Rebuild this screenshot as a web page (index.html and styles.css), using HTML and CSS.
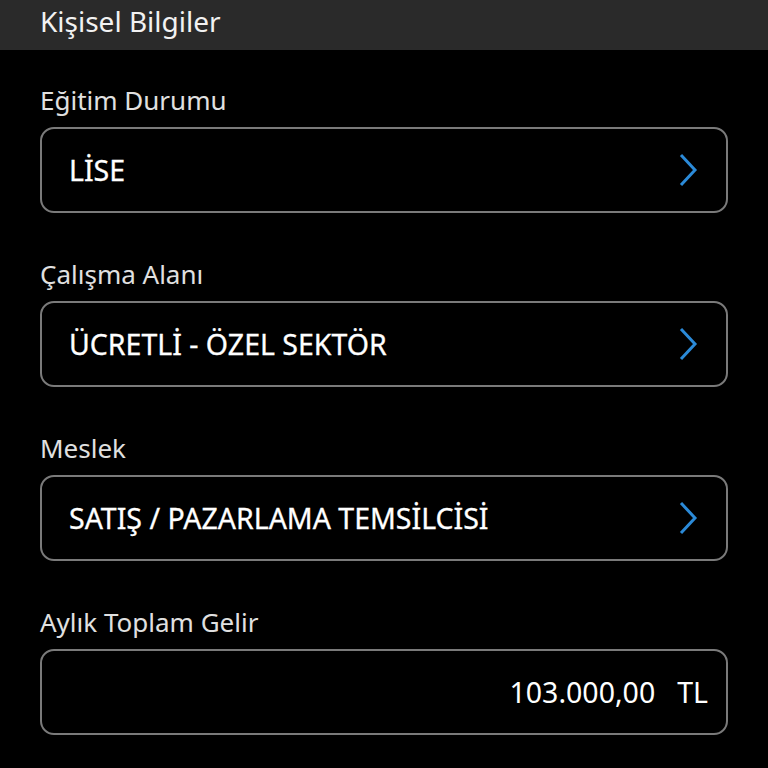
FILE: index.html
```html
<!DOCTYPE html>
<html lang="tr">
    <head>
        <meta charset="UTF-8" />
        <meta name="viewport" content="width=device-width, initial-scale=1.0" />
        <title>Kişisel Bilgiler</title>
        <link rel="stylesheet" href="styles.css">
    </head>
    <body>
        <div class="header">Kişisel Bilgiler</div>

        <div class="form">
            <div class="field">
                <div class="label">Eğitim Durumu</div>
                <div class="box select">
                    <span class="value">LİSE</span>
                    <svg class="chevron" width="20" height="34" viewBox="0 0 20 34"><polyline points="3,2 17,17 3,32" /></svg>
                </div>
            </div>

            <div class="field">
                <div class="label">Çalışma Alanı</div>
                <div class="box select">
                    <span class="value">ÜCRETLİ - ÖZEL SEKTÖR</span>
                    <svg class="chevron" width="20" height="34" viewBox="0 0 20 34"><polyline points="3,2 17,17 3,32" /></svg>
                </div>
            </div>

            <div class="field">
                <div class="label">Meslek</div>
                <div class="box select">
                    <span class="value">SATIŞ / PAZARLAMA TEMSİLCİSİ</span>
                    <svg class="chevron" width="20" height="34" viewBox="0 0 20 34"><polyline points="3,2 17,17 3,32" /></svg>
                </div>
            </div>

            <div class="field">
                <div class="label">Aylık Toplam Gelir</div>
                <div class="box amount">
                    <span class="number">103.000,00</span>
                    <span class="currency">TL</span>
                </div>
            </div>
        </div>
    </body>
</html>
```

FILE: styles.css
```css
body {
    margin: 0;
    background: #000;
    color: #fff;
    font-family: "Noto Sans", "Open Sans", sans-serif;
}

.header {
    height: 50px;
    background-color: #2a2a2a;
    padding-left: 40px;
    font-size: 28px;
    line-height: 42px;
    color: #f2f2f2;
}

.form {
    padding: 0 40px 0 40px;
}

.field {
    margin-top: 33px;
}

.field + .field {
    margin-top: 44px;
}

.label {
    font-size: 26px;
    line-height: 34px;
    color: #e0e0e0;
    margin-bottom: 10px;
}

.box {
    height: 82px;
    border: 2px solid #7a7a7a;
    border-radius: 14px;
    display: flex;
    align-items: center;
}

.select {
    padding: 0 28px 0 27px;
    justify-content: space-between;
}

.value {
    font-size: 28.5px;
    color: #fff;
    -webkit-text-stroke: 0.3px #fff;
}

.chevron polyline {
    fill: none;
    stroke: #2b8ad8;
    stroke-width: 3;
}

.amount {
    justify-content: flex-end;
    padding-right: 18px;
    font-size: 28.5px;
}

.number {
    margin-right: 22px;
}
```
